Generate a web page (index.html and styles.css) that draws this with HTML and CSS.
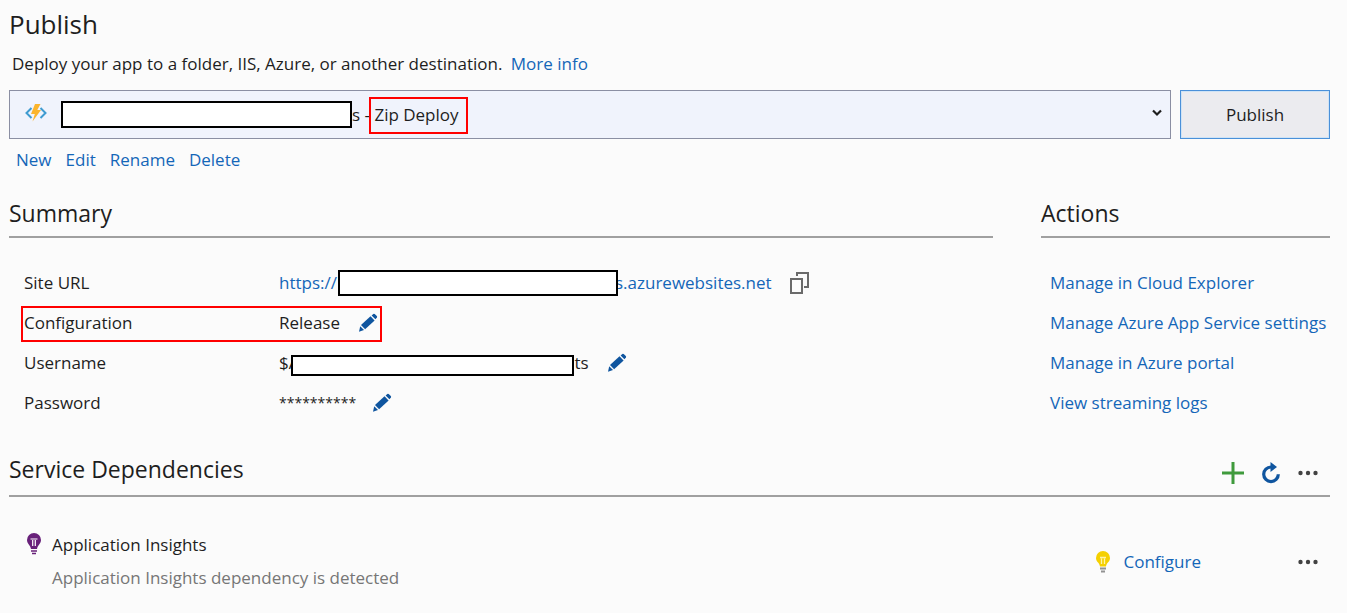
FILE: index.html
```html
<!DOCTYPE html>
<html lang="en">
<head>
<meta charset="utf-8">
<title>Publish</title>
<link rel="stylesheet" href="styles.css">
</head>
<body>
<svg class="sprite" width="0" height="0" aria-hidden="true">
  <symbol id="pencil" viewBox="0 0 20 20">
    <path d="M13.600 2.400 15.300.9q.7-.5 1.400.1l2.100 2.100q.6.7.1 1.400l-1.500 1.700z"/>
    <path d="M12.500 3.300 16.600 7.400 7.100 16.200 3 12.100z"/>
    <path d="M2.200 13.300 6 17.100 1 18.800z"/>
  </symbol>
  <symbol id="dots" viewBox="0 0 20 6">
    <circle cx="2.500" cy="3" r="2.200"/><circle cx="10" cy="3" r="2.200"/><circle cx="17.500" cy="3" r="2.200"/>
  </symbol>
</svg>
<main class="page">
  <h1 class="title">Publish</h1>
  <p class="intro">Deploy your app to a folder, IIS, Azure, or another destination. <a class="more" href="#">More info</a></p>

  <div class="profile-bar">
    <div class="profile">
      <select class="profile-select" aria-label="Publish profile">
        <option>s - Zip Deploy</option>
      </select>
      <svg class="profile-icon" width="22" height="18" viewBox="0 0 22 18" aria-hidden="true">
        <path d="M6.500 4 1.500 9l5 5" fill="none" stroke="#3f9bd0" stroke-width="2"/>
        <path d="M15.500 4l5 5-5 5" fill="none" stroke="#3f9bd0" stroke-width="2"/>
        <path d="M10 0h5.500L12.300 6H16L7.500 17.500 9.800 10H6z" fill="#fbb42c"/>
      </svg>
      <span class="mask profile-mask"></span>
      <span class="mark profile-mark"></span>
      <svg class="profile-arrow" width="10" height="8" viewBox="0 0 10 8" aria-hidden="true"><path d="M1 1.500 5 5.500 9 1.500" fill="none" stroke="#1e1e1e" stroke-width="2.200"/></svg>
    </div>
    <button class="publish" type="button">Publish</button>
  </div>

  <nav class="links" aria-label="Profile">
    <a href="#">New</a><a href="#">Edit</a><a href="#">Rename</a><a href="#">Delete</a>
  </nav>

  <div class="columns">
    <section>
      <h2 class="heading">Summary</h2>
      <dl class="summary">
        <div class="row">
          <dt>Site URL</dt>
          <dd><a class="url" href="#">https://<span class="mask url-mask"></span>s.azurewebsites.net</a>
            <button class="icon copy" type="button" aria-label="Copy"><svg width="20" height="22" viewBox="0 0 20 22" fill="none" stroke="#6a6a6a" stroke-width="2"><path d="M7 4V1h11v14h-4"/><path d="M1 7h11v14H1z"/></svg></button></dd>
        </div>
        <div class="row">
          <dt>Configuration</dt>
          <dd>Release
            <button class="icon edit" type="button" aria-label="Edit configuration"><svg width="20" height="20"><use href="#pencil"/></svg></button></dd>
          <span class="mark row-mark"></span>
        </div>
        <div class="row">
          <dt>Username</dt>
          <dd><span class="user">$A<span class="mask user-mask"></span>ts</span>
            <button class="icon edit" type="button" aria-label="Edit username"><svg width="20" height="20"><use href="#pencil"/></svg></button></dd>
        </div>
        <div class="row">
          <dt>Password</dt>
          <dd><span class="password">**********</span>
            <button class="icon edit" type="button" aria-label="Edit password"><svg width="20" height="20"><use href="#pencil"/></svg></button></dd>
        </div>
      </dl>
    </section>
    <section>
      <h2 class="heading">Actions</h2>
      <ul class="actions">
        <li><a href="#">Manage in Cloud Explorer</a></li>
        <li><a href="#">Manage Azure App Service settings</a></li>
        <li><a href="#">Manage in Azure portal</a></li>
        <li><a href="#">View streaming logs</a></li>
      </ul>
    </section>
  </div>

  <section>
    <div class="heading dep-head">
      <h2>Service Dependencies</h2>
      <div class="tools">
        <button class="icon" type="button" aria-label="Add"><svg width="22" height="22" viewBox="0 0 22 22"><path d="M11 0v22M0 11h22" stroke="#3f9a3c" stroke-width="3"/></svg></button>
        <button class="icon" type="button" aria-label="Refresh"><svg width="20" height="22" viewBox="0 0 20 22"><path d="M12.500 5H10a7.300 7.300 0 1 0 7.300 7.300" fill="none" stroke="#0f559f" stroke-width="3.200"/><path d="M9.500 0 16 5 9.500 10z" fill="#0f559f"/></svg></button>
        <button class="icon" type="button" aria-label="More options"><svg class="dots" width="20" height="6"><use href="#dots"/></svg></button>
      </div>
    </div>
    <div class="dependency">
      <svg class="bulb" width="16" height="22" viewBox="0 0 16 22" aria-hidden="true">
        <path d="M8 0a7 7 0 0 0-7 7c0 4 3.500 5 4 9h6c.500-4 4-5 4-9a7 7 0 0 0-7-7z" fill="#68217a"/>
        <path d="M6.700 13V7M9.300 13V7M4.500 6h7" fill="none" stroke="#fff" stroke-width="1.200"/>
        <path d="M5 18h6M6 20.500h4" stroke="#68217a" stroke-width="1.300"/>
      </svg>
      <div class="dep-text">
        <p>Application Insights</p>
        <p class="muted">Application Insights dependency is detected</p>
      </div>
      <div class="dep-action">
        <svg width="16" height="22" viewBox="0 0 16 22" aria-hidden="true">
          <path d="M8 0a7 7 0 0 0-7 7c0 4 3.500 4.500 4 8.500h6c.500-4 4-4.500 4-8.500a7 7 0 0 0-7-7z" fill="#f5d000"/>
          <path d="M6.500 13V7.500M9.500 13V7.500M5 6.500h6" fill="none" stroke="#fff3a8" stroke-width="1.300"/>
          <path d="M5 17.500h6M6 20.500h4" stroke="#929292" stroke-width="2"/>
        </svg>
        <a href="#">Configure</a>
      </div>
      <button class="icon dep-more" type="button" aria-label="More options"><svg class="dots" width="20" height="6"><use href="#dots"/></svg></button>
    </div>
  </section>
</main>
</body>
</html>
```
FILE: styles.css
```css
* { box-sizing: border-box; }
body {
  margin: 0;
  background: #fbfbfb;
  color: #1e1e1e;
  font: 17px/24px "Open Sans", "Noto Sans", sans-serif;
}
h1, h2, p, dl, dd, ul { margin: 0; padding: 0; }
ul { list-style: none; }
a { color: #1466b8; text-decoration: none; }
svg { display: block; flex: none; }
.sprite { position: absolute; }
.page { padding: 6px 17px 20px 9px; }
.title { font-size: 26px; line-height: 36px; font-weight: 400; }
.intro { margin-top: 10px; padding-left: 3px; }
.more { margin-left: 4px; }

.profile-bar { display: grid; grid-template-columns: 1fr 150px; gap: 9px; height: 49px; margin-top: 14px; }
.profile { position: relative; }
.profile-select {
  appearance: none;
  width: 100%;
  height: 100%;
  padding: 0 32px 0 342px;
  border: 1px solid #8b8fa3;
  border-radius: 0;
  background: #f0f3fc;
  color: inherit;
  font: inherit;
}
.profile-icon { position: absolute; left: 16px; top: 14px; }
.profile-arrow { position: absolute; right: 9px; top: 19px; pointer-events: none; }
.mask { background: #fff; border: 2px solid #000; }
.mark { position: absolute; border: 2px solid #f00; pointer-events: none; }
.profile-mask { position: absolute; left: 52px; top: 11px; width: 291px; height: 27px; }
.profile-mark { left: 360px; top: 7px; width: 99px; height: 37px; }
.publish { border: 1px solid #4a90d9; background: #ebebef; color: inherit; font: inherit; box-shadow: inset 0 0 0 1px #cfe3f5; }

.links { display: flex; gap: 14px; margin-top: 9px; padding-left: 7px; }

.columns { display: grid; grid-template-columns: 1fr 289px; gap: 48px; margin-top: 24px; }
.heading { padding-bottom: 6px; border-bottom: 2px solid #a0a0a0; }
.heading, .heading h2 { font-size: 23px; line-height: 34px; font-weight: 400; }
.summary, .actions { padding-top: 25px; }
.row { position: relative; display: grid; grid-template-columns: 255px 1fr; height: 40px; padding-left: 15px; align-items: center; }
.row dd { display: flex; align-items: center; }
.url, .user { display: flex; align-items: center; }
.url-mask, .user-mask { position: relative; }
.url-mask { width: 280px; height: 26px; margin: 0 -3px 0 1px; }
.user-mask { width: 283px; height: 21px; margin: 4px 0 0 -8px; }
.row-mark { left: 12px; top: 3px; width: 361px; height: 36px; }
.icon { display: flex; flex: none; padding: 0; border: 0; background: none; }
.copy { margin-left: 18px; }
.edit { margin-left: 18px; fill: #0f559f; }
.password { font-size: 14px; }
.password + .edit { margin-left: 16px; }
.actions li { height: 40px; padding: 8px 0 8px 9px; white-space: nowrap; }

.dep-head { display: flex; justify-content: space-between; align-items: center; margin-top: 29px; padding-bottom: 9px; }
.tools { display: flex; align-items: center; gap: 17px; padding: 8px 12px 0 0; }
.dots { fill: #424242; }
.dependency { display: flex; padding: 36px 12px 0 17px; }
.dep-text { flex: 1; margin-left: 10px; }
.dep-text .muted { margin-top: 9px; color: #767676; }
.dep-action { display: flex; align-items: center; gap: 12px; align-self: center; }
.dep-more { align-self: center; margin-left: 97px; }
```
